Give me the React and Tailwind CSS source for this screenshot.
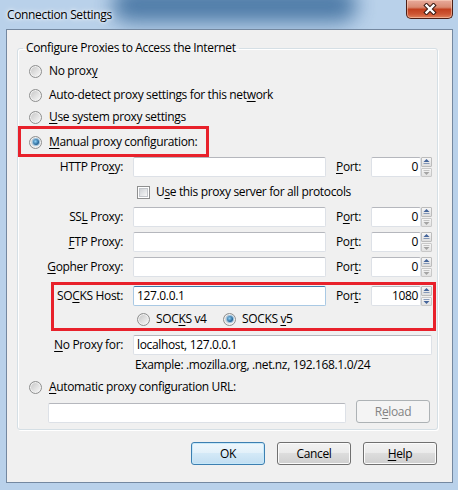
import React from "react";

// Access-key letter, underlined the way Windows dialogs mark mnemonics.
function K({ children }) {
  return <span className="underline decoration-1 underline-offset-[2px]">{children}</span>;
}

function Radio({ checked }) {
  return (
    <span className="flex h-[13px] w-[13px] shrink-0 items-center justify-center rounded-full border border-[#8e8f8f] bg-[linear-gradient(135deg,#c4c4c4,#fbfbfb)] shadow-[inset_0_0_0_1px_#f2f2f2]">
      {checked && (
        <span className="h-[6px] w-[6px] rounded-full bg-[radial-gradient(circle_at_40%_40%,#8fd0f5,#1c5c8f_70%,#0d3a63)] shadow-[0_0_0_1px_#9cc3df]" />
      )}
    </span>
  );
}

function Checkbox() {
  return (
    <span className="flex h-[13px] w-[13px] shrink-0 items-center justify-center border border-[#8e8f8f] bg-white">
      <span className="h-[9px] w-[9px] border border-[#c3c6cb] bg-[linear-gradient(135deg,#cfd2d6,#f7f7f7)]" />
    </span>
  );
}

function TextBox({ className, value, focused, right }) {
  return (
    <div
      className={`flex h-[20px] items-center rounded-[2px] border bg-white px-[3px] ${
        focused ? "border-[#a9c9e4] border-t-[#3d7bad]" : "border-[#dde1e7] border-t-[#b5b7bd]"
      } ${right ? "justify-end" : ""} ${className}`}
    >
      {value}
    </div>
  );
}

function Arrow({ up, on }) {
  const fill = on ? "#44649a" : "#a3a3a3";
  return (
    <svg width="7" height="5" viewBox="0 0 7 5">
      {up ? (
        <>
          <path d="M0.5 3 L3.5 0 L6.5 3 Z" fill={fill} />
          <rect x="0.5" y="4" width="6" height="1" fill={fill} opacity="0.6" />
        </>
      ) : (
        <>
          <rect x="0.5" y="0" width="6" height="1" fill={fill} opacity="0.6" />
          <path d="M0.5 2 L6.5 2 L3.5 5 Z" fill={fill} />
        </>
      )}
    </svg>
  );
}

function Spinner({ down }) {
  return (
    <div className="flex h-[20px] w-[11px] flex-col gap-[1px]">
      <div className="flex flex-1 items-center justify-center rounded-[1px] border border-[#bcbcbc] bg-[linear-gradient(#f6f6f6,#dedede)]">
        <Arrow up on />
      </div>
      <div className="flex flex-1 items-center justify-center rounded-[1px] border border-[#c8c8c8] bg-[linear-gradient(#f6f6f6,#e2e2e2)]">
        <Arrow on={down} />
      </div>
    </div>
  );
}

function PortField({ value, down }) {
  return (
    <div className="flex items-center">
      <TextBox className="w-[50px] pr-[2px]" value={value} right />
      <Spinner down={down} />
    </div>
  );
}

function ProxyRow({ label, value, port, portLabel, focused, labelWidth, down }) {
  return (
    <div className="flex h-[20px] items-center">
      <div className={`text-right ${labelWidth}`}>{label}</div>
      <TextBox className="ml-[10px] w-[193px]" value={value} focused={focused} />
      <div className="ml-[10px] w-[35px]">{portLabel}</div>
      <PortField value={port} down={down} />
    </div>
  );
}

function Btn({ children, primary, disabled, className = "" }) {
  return (
    <div
      className={`flex h-[23px] items-center justify-center rounded-[3px] border ${
        disabled
          ? "border-[#adb2b5] bg-[#f4f4f4] text-[#838383]"
          : primary
          ? "border-[#3c7fb1] bg-[linear-gradient(to_bottom,#eef7fc_0%,#e3f1fa_45%,#d3e9f7_50%,#c2def2_100%)] shadow-[inset_0_0_0_1px_#c6e8f9]"
          : "border-[#707070] bg-[linear-gradient(to_bottom,#f2f2f2_0%,#ebebeb_45%,#dddddd_50%,#cfcfcf_100%)] shadow-[inset_0_0_0_1px_#fbfbfb]"
      } ${className}`}
    >
      {children}
    </div>
  );
}

export default function App() {
  return (
    <div className="flex h-[490px] w-[458px] flex-col overflow-hidden bg-[#b9d1ea] font-['Open_Sans',sans-serif] text-[12px] leading-[16px] tracking-[-0.35px] text-black">
      {/* caption */}
      <div className="relative flex h-[29px] shrink-0 items-start overflow-hidden">
        {/* dark glass streak behind the caption */}
        <div className="pointer-events-none absolute left-[112px] top-[-12px] h-[34px] w-[245px] rounded-full bg-[#3a6b9b] opacity-85 blur-[10px]" />
        <span className="relative ml-[7px] mt-[7px] [text-shadow:0_0_6px_#ffffff,0_0_3px_#ffffff]">Connection Settings</span>
        <div className="relative ml-auto mr-[5px] flex h-[19px] w-[47px] items-center justify-center rounded-b-[5px] border border-t-0 border-[#4d1e15] bg-[linear-gradient(to_bottom,#e8ab9c_0%,#d98a72_40%,#c2401f_52%,#cd5533_78%,#e0825c_100%)] shadow-[inset_0_0_0_1px_#ffdcc880]">
          <svg width="14" height="12" viewBox="0 0 14 12">
            <path d="M3.5 2.5 L10.5 9.5 M10.5 2.5 L3.5 9.5" stroke="#3a1a14" strokeWidth="4.4" strokeLinecap="square" />
            <path d="M3.5 2.5 L10.5 9.5 M10.5 2.5 L3.5 9.5" stroke="#ffffff" strokeWidth="2.4" strokeLinecap="square" />
          </svg>
        </div>
      </div>

      {/* client area */}
      <div className="ml-[6px] mr-[5px] flex h-[454px] shrink-0 flex-col border border-[#7488a0] bg-[#f0f0f0]">
        <fieldset className="ml-[10px] mr-[14px] mt-[10px] rounded-[3px] border border-[#d5dfe5] shadow-[inset_1px_1px_0_#ffffff,1px_1px_0_#ffffff]">
          <legend className="ml-[5px] px-[3px] leading-[16px]">Configure Proxies to Access the Internet</legend>

          <div className="flex flex-col pt-[5px] pb-[6px]">
            <div className="flex h-[20px] items-center gap-[7px] pl-[11px]">
              <Radio />
              <span>No prox<K>y</K></span>
            </div>
            <div className="mt-[4px] flex h-[20px] items-center gap-[7px] pl-[11px]">
              <Radio />
              <span>Auto-detect proxy settings for this net<K>w</K>ork</span>
            </div>
            <div className="mt-[3px] flex h-[18px] items-center gap-[7px] pl-[11px]">
              <Radio />
              <span><K>U</K>se system proxy settings</span>
            </div>

            <div className="flex h-[31px] w-[191px] items-center gap-[7px] border-[3px] border-[#e8212b] pl-[8px] pt-[1px]">
              <Radio checked />
              <span><K>M</K>anual proxy configuration:</span>
            </div>

            <ProxyRow
              labelWidth="w-[105px]"
              label={<>HTTP Pro<K>x</K>y:</>}
              portLabel={<><K>P</K>ort:</>}
              port="0"
            />
            <div className="mt-[5px] flex h-[20px] items-center gap-[6px] pl-[119px]">
              <Checkbox />
              <span>U<K>s</K>e this proxy server for all protocols</span>
            </div>
            <div className="mt-[5px]">
              <ProxyRow
                labelWidth="w-[105px]"
                label={<>SS<K>L</K> Proxy:</>}
                portLabel={<>P<K>o</K>rt:</>}
                port="0"
              />
            </div>
            <div className="mt-[5px]">
              <ProxyRow
                labelWidth="w-[105px]"
                label={<><K>F</K>TP Proxy:</>}
                portLabel={<>Po<K>r</K>t:</>}
                port="0"
              />
            </div>
            <div className="mt-[5px]">
              <ProxyRow
                labelWidth="w-[105px]"
                label={<><K>G</K>opher Proxy:</>}
                portLabel={<>Por<K>t</K>:</>}
                port="0"
              />
            </div>

            <div className="ml-[33px] mt-[5px] flex h-[49px] w-[385px] flex-col border-[3px] border-[#e8212b] pt-[1px]">
              <ProxyRow
                labelWidth="w-[69px]"
                label={<>SO<K>C</K>KS Host:</>}
                portLabel={<>Por<K>t</K>:</>}
                value="127.0.0.1"
                port="1080"
                focused
                down
              />
              <div className="mt-[4px] flex h-[18px] items-center pl-[83px]">
                <div className="flex w-[86px] items-center gap-[6px]">
                  <Radio />
                  <span>SOC<K>K</K>S v4</span>
                </div>
                <div className="flex items-center gap-[6px]">
                  <Radio checked />
                  <span>SOCKS <K>v</K>5</span>
                </div>
              </div>
            </div>

            <div className="mt-[4px] flex h-[19px] items-center">
              <div className="w-[105px] text-right"><K>N</K>o Proxy for:</div>
              <TextBox className="ml-[10px] h-[19px] w-[299px]" value="localhost, 127.0.0.1" />
            </div>
            <div className="mt-[1px] flex h-[20px] items-center pl-[117px]">
              Example: .mozilla.org, .net.nz, 192.168.1.0/24
            </div>

            <div className="mt-[2px] flex h-[20px] items-center gap-[7px] pl-[11px]">
              <Radio />
              <span><K>A</K>utomatic proxy configuration URL:</span>
            </div>
            <div className="mt-[3px] flex h-[23px] items-start pl-[30px]">
              <TextBox className="mt-[3px] h-[19px] w-[298px]" value="" />
              <Btn disabled className="ml-[10px] w-[74px]">R<K>e</K>load</Btn>
            </div>
          </div>
        </fieldset>

        <div className="mr-[15px] mt-[12px] flex justify-end gap-[12px]">
          <Btn primary className="w-[74px]">OK</Btn>
          <Btn className="w-[74px]">Cancel</Btn>
          <Btn className="w-[74px]"><K>H</K>elp</Btn>
        </div>
      </div>
    </div>
  );
}
